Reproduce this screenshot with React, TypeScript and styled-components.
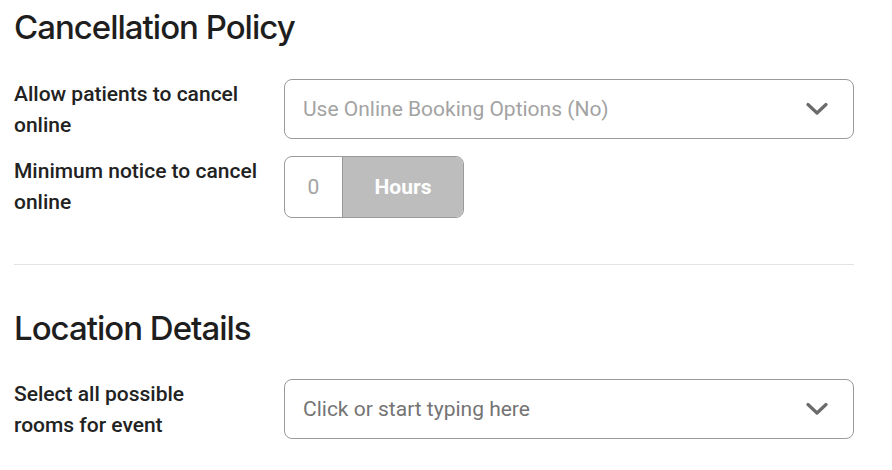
import React from "react";
import styled, { createGlobalStyle } from "styled-components";

const Global = createGlobalStyle`
  html, body { margin: 0; padding: 0; background: #fff; }
  body { font-family: Roboto, "Liberation Sans", sans-serif; }
`;

const Page = styled.div`
  width: 840px;
  padding: 0 38px 0 14px;
`;

const Section = styled.section<{ $top: number }>`
  padding-top: ${(p) => p.$top}px;
`;

const Heading = styled.h2`
  margin: 0;
  font-family: Inter, "Liberation Sans", sans-serif;
  font-weight: 500;
  font-size: 33px;
  line-height: 40px;
  letter-spacing: -1px;
  color: #1e1e1e;
`;

const Rows = styled.div<{ $top: number }>`
  display: flex;
  flex-direction: column;
  gap: 15px;
  margin-top: ${(p) => p.$top}px;
`;

const Row = styled.div`
  display: grid;
  grid-template-columns: 270px 1fr;
  align-items: start;
`;

const Label = styled.div<{ $w?: number }>`
  font-size: 21px;
  font-weight: 500;
  line-height: 31px;
  color: #222;
  max-width: ${(p) => p.$w ?? 260}px;
`;

const SelectBox = styled.div`
  box-sizing: border-box;
  height: 60px;
  border: 1px solid #9a9a9a;
  border-radius: 8px;
  display: flex;
  align-items: center;
  justify-content: space-between;
  padding: 0 25px 0 18px;
`;

const SelectText = styled.span<{ $muted?: boolean }>`
  font-size: 21px;
  color: ${(p) => (p.$muted ? "#a3a3a3" : "#747474")};
`;

const Chevron = () => (
  <svg width="22" height="14" viewBox="0 0 22 14">
    <polyline
      points="2,2.5 11,11 20,2.5"
      fill="none"
      stroke="#6b6b6b"
      strokeWidth="3.2"
      strokeLinecap="round"
      strokeLinejoin="round"
    />
  </svg>
);

const NumberGroup = styled.div`
  box-sizing: border-box;
  width: 180px;
  height: 62px;
  border: 1px solid #9a9a9a;
  border-radius: 8px;
  overflow: hidden;
  display: flex;
`;

const NumberCell = styled.div`
  width: 57px;
  border-right: 1px solid #9a9a9a;
  display: flex;
  align-items: center;
  justify-content: center;
  font-size: 21px;
  color: #a3a3a3;
`;

const UnitCell = styled.div`
  flex: 1;
  background: #bdbdbd;
  display: flex;
  align-items: center;
  justify-content: center;
  font-size: 21px;
  font-weight: 700;
  color: #fff;
`;

const Divider = styled.hr`
  margin: 46px 0 0;
  border: 0;
  border-top: 1px solid #e3e3e3;
`;

export default function App() {
  return (
    <>
      <Global />
      <Page>
        <Section $top={7}>
          <Heading>Cancellation Policy</Heading>
          <Rows $top={32}>
            <Row>
              <Label>Allow patients to cancel online</Label>
              <SelectBox>
                <SelectText $muted>Use Online Booking Options (No)</SelectText>
                <Chevron />
              </SelectBox>
            </Row>
            <Row>
              <Label>Minimum notice to cancel online</Label>
              <NumberGroup>
                <NumberCell>0</NumberCell>
                <UnitCell>Hours</UnitCell>
              </NumberGroup>
            </Row>
          </Rows>
          <Divider />
        </Section>
        <Section $top={43}>
          <Heading>Location Details</Heading>
          <Rows $top={31}>
            <Row>
              <Label $w={200}>Select all possible rooms for event</Label>
              <SelectBox>
                <SelectText>Click or start typing here</SelectText>
                <Chevron />
              </SelectBox>
            </Row>
          </Rows>
        </Section>
      </Page>
    </>
  );
}
